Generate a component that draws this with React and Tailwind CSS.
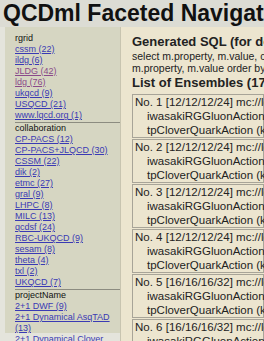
const facets = [
  {
    name: 'rgrid',
    items: [
      ['cssm (22)'],
      ['ildg (6)'],
      ['JLDG (42)', true],
      ['ldg (76)', true],
      ['ukqcd (9)'],
      ['USQCD (21)'],
      ['www.lqcd.org (1)'],
    ],
  },
  {
    name: 'collaboration',
    items: [
      ['CP-PACS (12)'],
      ['CP-PACS+JLQCD (30)'],
      ['CSSM (22)'],
      ['dik (2)'],
      ['etmc (27)'],
      ['gral (9)'],
      ['LHPC (8)'],
      ['MILC (13)'],
      ['qcdsf (24)'],
      ['RBC-UKQCD (9)'],
      ['sesam (8)'],
      ['theta (4)'],
      ['txl (2)'],
      ['UKQCD (7)'],
    ],
  },
  {
    name: 'projectName',
    items: [
      ['2+1 DWF (9)'],
      ['2+1 Dynamical AsqTAD (13)'],
      ['2+1 Dynamical Clover (1)'],
    ],
  },
]

const ensembles = [
  ['1', '12/12/12/24'],
  ['2', '12/12/12/24'],
  ['3', '12/12/12/24'],
  ['4', '12/12/12/24'],
  ['5', '16/16/16/32'],
  ['6', '16/16/16/32'],
]

export default function App() {
  return (
    <div className="w-[264px] h-[341px] overflow-hidden bg-[#e4e4dc] text-[#222]" style={{ fontFamily: '"Liberation Sans", Arial, sans-serif' }}>
      <h1 className="h-[27px] bg-[#dcdcd4] pl-[3px] text-[23px] leading-[27px] font-bold whitespace-nowrap text-[#111]">
        QCDml Faceted Navigation
      </h1>
      <div className="flex pl-[5px]">
        <div className="w-[115px] shrink-0 bg-[#d6d6c2] pt-[6px] pl-[10px] h-[306px]">
          {facets.map((f, i) => (
            <div key={f.name} className={i > 0 ? 'border-t border-[#8c8c80] mt-[1px]' : ''}>
              <div className="text-[9px] leading-[11px] text-[#111]">{f.name}</div>
              {f.items.map(([label, visited]) => (
                <div key={label} className="text-[9px] leading-[11px] pr-[6px]">
                  <a href="#" className={`underline ${visited ? 'text-[#8a4a8a]' : 'text-[#3a3ab4]'}`}>{label}</a>
                </div>
              ))}
            </div>
          ))}
        </div>
        <div className="flex-1 min-w-0 bg-[#ece5cf] border-l border-[#c8c4b0] pl-[11px] pt-[7px] h-[314px] whitespace-nowrap overflow-hidden">
          <h2 className="text-[13px] leading-[16px] font-bold">Generated SQL (for debug)</h2>
          <p className="text-[10.5px] leading-[12px]">select m.property, m.value, count(*) from meta m group by</p>
          <p className="text-[10.5px] leading-[12px]">m.property, m.value order by m.property</p>
          <h2 className="text-[13px] leading-[16px] font-bold mt-[1px]">List of Ensembles (170)</h2>
          <div className="mt-[3px]">
            {ensembles.map(([n, size]) => (
              <div key={n} className="border border-[#a8a498] mb-[1px] pl-[2px] text-[11.5px] leading-[14px]">
                <div>No. {n} [{size}] mc://ldg/cppacs/rc{size.replace(/\//g, '')}</div>
                <div className="pl-[12px]">iwasakiRGGluonAction (beta=1.8)</div>
                <div className="pl-[12px]">tpCloverQuarkAction (k=0.1409)</div>
              </div>
            ))}
          </div>
        </div>
      </div>
    </div>
  )
}
